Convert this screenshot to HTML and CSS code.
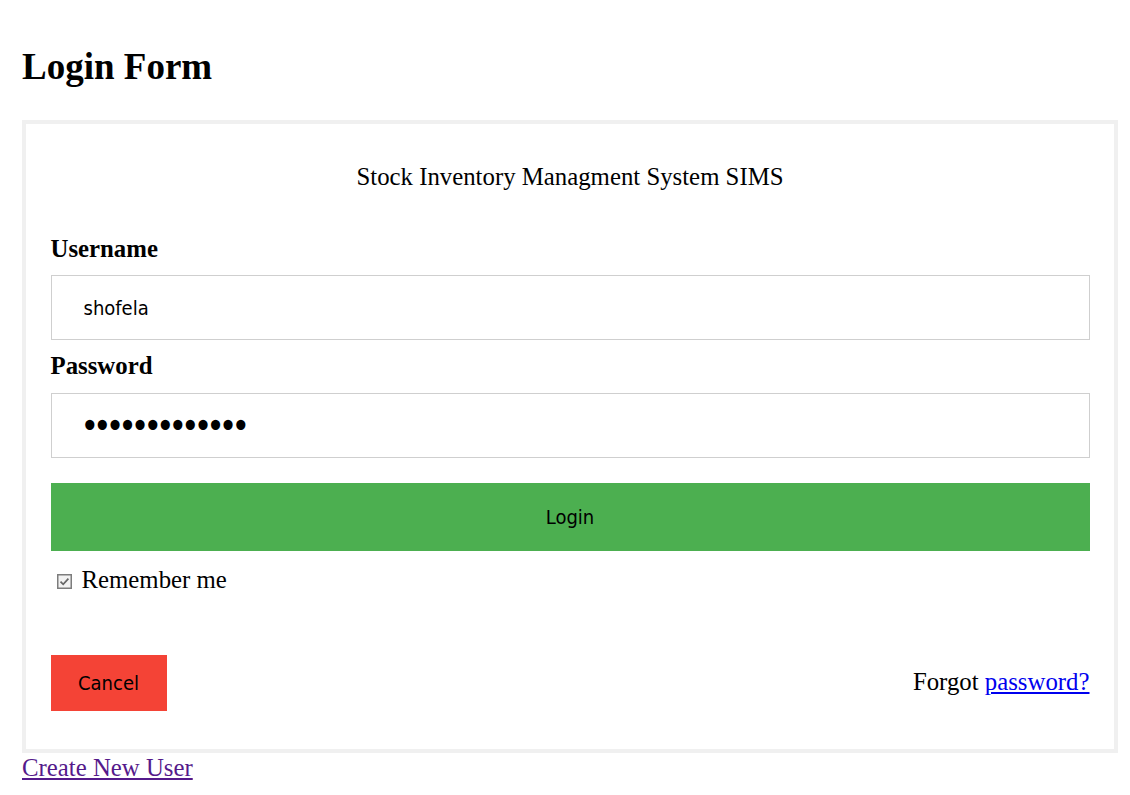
FILE: index.html
```html
<!DOCTYPE html>
<html>
<head>
<meta charset="utf-8">
<title>Login Form</title>
<link rel="stylesheet" href="styles.css">
</head>
<body>
<h1 class="page-title">Login Form</h1>
<form class="login-form" onsubmit="return false">
  <div class="container">
    <div class="system-name">Stock Inventory Managment System SIMS</div>
    <label class="field-label" for="uname">Username</label>
    <input class="text-input" id="uname" type="text" value="shofela">
    <label class="field-label" for="psw">Password</label>
    <input class="text-input password" id="psw" type="password" value="1234567890123">
    <button class="login-btn" type="submit">Login</button>
    <label class="remember">
      <svg class="check" width="15" height="15" viewBox="0 0 15 15" aria-hidden="true">
        <rect x="0.75" y="0.75" width="13.5" height="13.5" fill="#f2f2f2" stroke="#7d7d7d" stroke-width="1.5"/>
        <path d="M3.5 7.6 L6.2 10.3 L11.4 4.6" fill="none" stroke="#666" stroke-width="1.7"/>
      </svg>
      <span>Remember me</span>
    </label>
  </div>
  <div class="container footer">
    <button class="cancel-btn" type="button">Cancel</button>
    <span class="psw">Forgot <a class="link-blue" href="#">password?</a></span>
  </div>
</form>
<a class="create-link" href="#">Create New User</a>
</body>
</html>
```

FILE: styles.css
```css
html, body {
  background: #ffffff;
}

body {
  margin: 0 12px 0 22px;
  font-family: "Liberation Serif", "Times New Roman", serif;
  font-size: 24.8px;
  color: #000;
}

.page-title {
  font-size: 37px;
  font-weight: bold;
  margin: 46px 0 0;
  line-height: 42px;
  height: 42px;
}

.login-form {
  margin-top: 32px;
  border: 4.5px solid #f0f0f0;
}

.container {
  padding: 24px 24.5px;
}

.system-name {
  text-align: center;
  line-height: 28px;
  margin: 15px 0 44px;
}

.field-label {
  display: block;
  font-weight: bold;
  line-height: 28px;
}

.text-input {
  display: block;
  box-sizing: border-box;
  width: 100%;
  height: 65px;
  margin: 12px 0;
  padding: 0 30px 0 32px;
  border: 1.5px solid #cfcfcf;
  font-family: "DejaVu Sans Condensed", "DejaVu Sans", sans-serif;
  font-size: 20px;
  color: #000;
  background: #fff;
  outline: none;
}

#psw {
  margin-top: 13px;
}

.text-input.password {
  font-size: 35px;
  letter-spacing: -6px;
  padding-left: 29px;
}

.login-btn {
  display: block;
  width: 100%;
  height: 68px;
  margin: 25px 0 15px;
  border: none;
  background: #4caf50;
  color: #000;
  font-family: "DejaVu Sans Condensed", "DejaVu Sans", sans-serif;
  font-size: 20px;
  padding: 0;
}

.remember {
  display: flex;
  align-items: center;
  height: 28px;
  gap: 10px;
  padding-left: 6px;
}

.check {
  display: block;
  margin-top: 3px;
}

.footer {
  display: flex;
  justify-content: space-between;
  align-items: flex-start;
  padding-top: 25px;
  padding-bottom: 26px;
}

.cancel-btn {
  width: 116px;
  height: 56px;
  margin: 12px 0;
  border: none;
  background: #f44336;
  color: #000;
  font-family: "DejaVu Sans Condensed", "DejaVu Sans", sans-serif;
  font-size: 20px;
  padding: 0;
}

.psw {
  padding-top: 25px;
  line-height: 28px;
}

.link-blue {
  color: #0000ee;
}

.create-link {
  display: inline-block;
  color: #551a8b;
  line-height: 30px;
}
```
